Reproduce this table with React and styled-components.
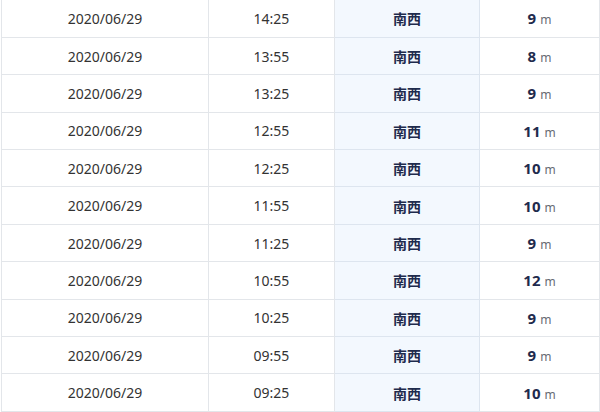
import React from 'react';
import styled, { createGlobalStyle } from 'styled-components';

const GlobalStyle = createGlobalStyle`
  html, body {
    margin: 0;
    padding: 0;
    background: #ffffff;
  }
  body {
    font-family: "Noto Sans", "Open Sans", "Noto Sans CJK SC", sans-serif;
  }
`;

const Wrapper = styled.div`
  width: 600px;
  height: 412px;
  overflow: hidden;
  padding-left: 1px;
  box-sizing: border-box;
`;

const Table = styled.table`
  width: 598px;
  border-collapse: collapse;
  table-layout: fixed;
  border-left: 1px solid #e3e6ea;
`;

const Row = styled.tr`
  height: 37.4px;
`;

const Cell = styled.td`
  padding: 0;
  height: 36.4px;
  text-align: center;
  vertical-align: middle;
  border-right: 1px solid ${props => (props.$highlight ? '#dde5ef' : '#e3e6ea')};
  border-bottom: 1px solid ${props => (props.$highlight ? '#dde5ef' : '#e3e6ea')};
  background: ${props => (props.$highlight ? '#f3f8fe' : '#ffffff')};
  font-size: 14px;
  color: #333333;
`;

const Direction = styled.span`
  font-family: "Noto Sans CJK SC", sans-serif;
  font-weight: 700;
  font-size: 14px;
  color: #1f2b4d;
`;

const Speed = styled.span`
  font-weight: 700;
  font-size: 15px;
  color: #1f2b4d;
`;

const Unit = styled.span`
  font-size: 12px;
  color: #666a73;
  margin-left: 4px;
`;

const rows = [
  ['14:25', 9],
  ['13:55', 8],
  ['13:25', 9],
  ['12:55', 11],
  ['12:25', 10],
  ['11:55', 10],
  ['11:25', 9],
  ['10:55', 12],
  ['10:25', 9],
  ['09:55', 9],
  ['09:25', 10],
];

export default function App() {
  return (
    <>
      <GlobalStyle />
      <Wrapper>
        <Table>
          <colgroup>
            <col style={{ width: 207 }} />
            <col style={{ width: 126 }} />
            <col style={{ width: 145 }} />
            <col style={{ width: 120 }} />
          </colgroup>
          <tbody>
            {rows.map(([time, speed]) => (
              <Row key={time}>
                <Cell>2020/06/29</Cell>
                <Cell>{time}</Cell>
                <Cell $highlight>
                  <Direction>南西</Direction>
                </Cell>
                <Cell>
                  <Speed>{speed}</Speed>
                  <Unit>m</Unit>
                </Cell>
              </Row>
            ))}
          </tbody>
        </Table>
      </Wrapper>
    </>
  );
}
